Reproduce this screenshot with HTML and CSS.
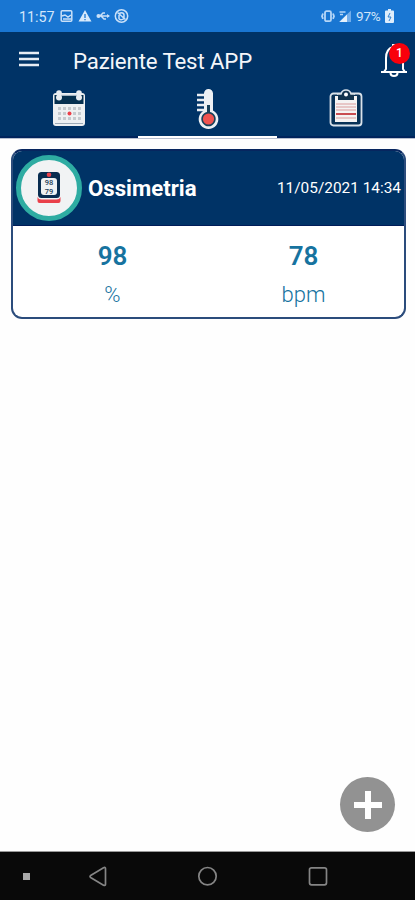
FILE: index.html
```html
<!DOCTYPE html>
<html lang="it">
<head>
<meta charset="utf-8">
<meta name="viewport" content="width=device-width, initial-scale=1">
<title>Paziente Test APP</title>
<link rel="stylesheet" href="styles.css">
</head>
<body>
<div class="status">
  <span class="clock">11:57</span>
  <svg class="status-left" width="70" height="14" viewBox="0 0 70 14" fill="none" stroke="#c9e0f8" stroke-width="1.5">
    <rect x="1.2" y="1.7" width="10.6" height="10.6" rx="1"/><path d="M2 7l3-1 3 2 3-2M3 10h8"/>
    <path d="M25 1l6.500 11.500h-13z" fill="#d9eafb" stroke="none"/><path d="M25 5v4M25 10v1.300" stroke="#1976d2" stroke-width="1.300"/>
    <path d="M37 7h12M40 7l3-3h2M41 7l3 3h2"/><circle cx="38.500" cy="7" r="1.300" fill="#c9e0f8"/><path d="M47 5l3 2-3 2z" fill="#c9e0f8" stroke="none"/>
    <circle cx="61.500" cy="7" r="6.200"/><path d="M57.500 3.500l8 7M59 10V6c0-3 5-3 5 0v3c0 2-4 2-5 1"/>
  </svg>
  <svg class="status-right" width="31" height="14" viewBox="0 0 31 14" fill="none" stroke="#b5d6f7" stroke-width="1.500">
    <rect x="4" y="2.200" width="6" height="10" rx="1.500" stroke-width="1.800"/><path d="M2 4.500L1 7.200l1 2.700M12 4.500l1 2.700-1 2.700" stroke-width="1.800"/>
    <path d="M30 1.500v11.500H18z" fill="#72adea" stroke="none"/><path d="M26 5.500v7.500h-7.500z" fill="#e5f1fc" stroke="none"/><path d="M18.500 3h6M19 5.500h3"/>
  </svg>
  <span class="charge">97%</span>
  <svg width="9" height="14" viewBox="0 0 9 14"><path d="M3 0h3v1.500h2q1 0 1 1V13q0 1-1 1H1q-1 0-1-1V2.500q0-1 1-1h2z" fill="#deedfc"/><path d="M5 4L3 8h3l-2 4" fill="none" stroke="#3180cf"/></svg>
</div>
<header>
  <div class="toolbar">
    <svg class="menu" width="20" height="16" viewBox="0 0 20 16" stroke="#e8edf4" stroke-width="2.300"><path d="M0 2h20M0 8h20M0 14h20"/></svg>
    <h1>Paziente Test APP</h1>
    <div class="bell">
      <svg width="30" height="35" viewBox="0 0 30 35" fill="none" stroke="#fff" stroke-width="2"><path d="M2 29h26M5 29l2-3V15q0-9 7-11V2h3v2q7 2 7 11v11l2 3"/><path d="M11.500 30c0 4 7 4 7 0"/></svg>
      <span class="badge">1</span>
    </div>
  </div>
  <nav>
    <a><svg width="34" height="38" viewBox="0 0 34 38">
      <path d="M4 4h26q3 0 3 3v27q0 3-3 3H4q-3 0-3-3V7q0-3 3-3z" fill="#eef0f1"/><path d="M2.500 6h29v9h-29z" fill="#06304f"/>
      <path d="M7 6h20" stroke="#d8dfe6" stroke-width="1.500"/>
      <g fill="#e9edf1"><circle cx="7" cy="4" r="2.800"/><circle cx="7" cy="8.500" r="3"/><circle cx="27" cy="4" r="2.800"/><circle cx="27" cy="8.500" r="3"/></g>
      <path d="M3 34.500h28" stroke="#9eabb7"/>
      <path d="M6 19.500h23M6 24.500h23M6 29.500h23" stroke="#c5cace" stroke-width="3" stroke-dasharray="3 2"/>
      <circle cx="17.500" cy="24.500" r="2" fill="#ed3f49"/>
    </svg></a>
    <a class="active"><svg class="thermometer" width="24" height="42" viewBox="0 0 24 42">
      <path d="M1 7h9M1 12h9M1 17h9M1 22h9" stroke="#e9edf2" stroke-width="2.600"/>
      <path d="M8 5.500a4.500 4.500 0 0 1 9 0v17a9.800 9.800 0 1 1-9 0z" fill="#edf0f4"/>
      <path d="M11 17h3v7a7.200 7.200 0 1 1-3 0z" fill="#17415b"/>
      <circle cx="12.500" cy="31" r="5.600" fill="#ef5350"/>
    </svg></a>
    <a><svg width="34" height="40" viewBox="0 0 34 40">
      <rect x="1.500" y="4.500" width="31" height="32" rx="3" fill="#073156" stroke="#d9e2ea" stroke-width="1.800"/>
      <path d="M6 7h22v26H6z" fill="#f5f3f3"/><path d="M9 5h3q1-4 5-4t5 4h3v6H9z" fill="#12344f"/><path d="M8 5h4q1-4 5-4t5 4h4" fill="none" stroke="#d9e2ea" stroke-width="1.500"/><circle cx="17" cy="5.500" r="2" fill="#fff"/>
      <path d="M7 15h20M7 18h20M7 21h20M7 29h20" stroke="#d99c9c" stroke-width="1.200"/><path d="M7 25h20" stroke="#c94c51" stroke-width="2"/>
    </svg></a>
  </nav>
</header>
<main>
  <section class="card">
    <div class="card-head">
      <div class="avatar"><svg width="26" height="34" viewBox="0 0 26 34">
        <rect x="2" y="1" width="22" height="26" rx="3.500" fill="#082d50"/>
        <path d="M1.500 26q1 2.500 4 2.500h15q3 0 4-2.500v4q0 2-2 2h-19q-2 0-2-2z" fill="#e9404a"/>
        <circle cx="13" cy="3.800" r="2.300" fill="#e9404a"/><rect x="5" y="7" width="16" height="17" rx="3" fill="#eef2f3"/>
        <text x="13" y="14" class="device-text">98</text><text x="13" y="22.500" class="device-text">79</text>
      </svg></div>
      <h2>Ossimetria</h2>
      <time>11/05/2021 14:34</time>
    </div>
    <div class="values">
      <div><strong>98</strong><span>%</span></div>
      <div><strong>78</strong><span>bpm</span></div>
    </div>
  </section>
  <button class="add" aria-label="Aggiungi"><svg width="28" height="28" viewBox="0 0 28 28"><path d="M14 0v28M0 14h28" stroke="#fff" stroke-width="6"/></svg></button>
</main>
<footer>
  <svg width="415" height="48" viewBox="0 0 415 48" fill="none" stroke="#858585" stroke-width="1.700"><rect x="23" y="21" width="7" height="7" fill="#aaa" stroke="none"/><path d="M91 23.200l12.500-7.500q2-.8 2 1v15.500q0 1.800-2 1L91 25.800q-2-1.300 0-2.600z"/><circle cx="207.500" cy="24.200" r="8.700"/><rect x="309.500" y="15.800" width="17" height="17" rx="2"/></svg>
</footer>
</body>
</html>
```
FILE: styles.css
```css
* { box-sizing: border-box; }
body { margin: 0; height: 900px; display: flex; flex-direction: column; overflow: hidden; background: #fefefe; font-family: Roboto, sans-serif; }
h1, h2 { margin: 0; }
svg { display: block; flex: none; }
.status { height: 32px; flex: none; display: flex; align-items: center; padding: 0 21px 0 19px; background: #1976d2; color: #d3e6fa; }
.clock { width: 41px; font-size: 14.3px; line-height: 18px; padding-top: 1px; }
.status-right { margin-left: auto; }
.charge { width: 30px; padding-left: 4px; font-size: 13.5px; letter-spacing: -.2px; margin-right: 3px; }
header { height: 107px; flex: none; background: #003366; border-bottom: 1px solid #b7bfcf; }
.toolbar { height: 57px; display: flex; align-items: center; padding-left: 19px; }
.menu { margin-top: -4px; }
h1 { margin-left: 34px; font-size: 22.2px; line-height: 30px; font-weight: 400; color: #f4f6fa; letter-spacing: -.12px; }
.bell { position: relative; width: 30px; height: 35px; margin: 0 6px 0 auto; }
.badge { position: absolute; left: 10px; top: 0; width: 21px; height: 21px; border-radius: 50%; background: #f9000b; color: #fff; font-size: 12px; font-weight: 500; line-height: 21px; text-align: center; }
nav { height: 49px; display: grid; grid-template-columns: repeat(3, 1fr); }
nav a { display: flex; justify-content: center; align-items: flex-start; border-bottom: 2px solid #00245c; }
nav .active { border-bottom-color: #fff; }
.thermometer { margin: -1px 0 0 2px; }
main { flex: 1; position: relative; padding: 10px 9px 0 11px; }
.card { height: 170px; border: 2px solid #2b4c7c; border-top-color: #07265f; border-radius: 11px; overflow: hidden; background: #fff; }
.card-head { height: 75px; display: flex; align-items: center; padding: 0 3px 0 3px; background: #003366; border-bottom: 1px solid #001c58; color: #fff; }
.avatar { width: 66px; height: 66px; flex: none; border: 5px solid #2eaca2; border-radius: 50%; background: #f1f3f4; display: flex; align-items: center; justify-content: center; }
.device-text { font: 500 7.5px/1 Roboto, sans-serif; fill: #254058; text-anchor: middle; }
h2 { margin-left: 6px; font-size: 22.2px; line-height: 28px; font-weight: 700; padding-bottom: 1px; }
time { margin-left: auto; font-size: 15.4px; white-space: nowrap; }
.values { display: grid; grid-template-columns: 1fr 1fr; padding: 0 5px 0 4px; text-align: center; color: #17739f; }
.values div { display: flex; flex-direction: column; }
.values strong { margin-top: 15px; font-size: 26px; line-height: 30px; font-weight: 600; }
.values span { margin-top: 9px; font-size: 22px; line-height: 30px; font-weight: 300; }
.add { position: absolute; right: 20px; bottom: 20px; width: 55px; height: 55px; padding: 0; border: 0; border-radius: 50%; background: #929292; display: flex; align-items: center; justify-content: center; }
footer { height: 48px; flex: none; background: #090909; box-shadow: 0 -1px #999; }
```
